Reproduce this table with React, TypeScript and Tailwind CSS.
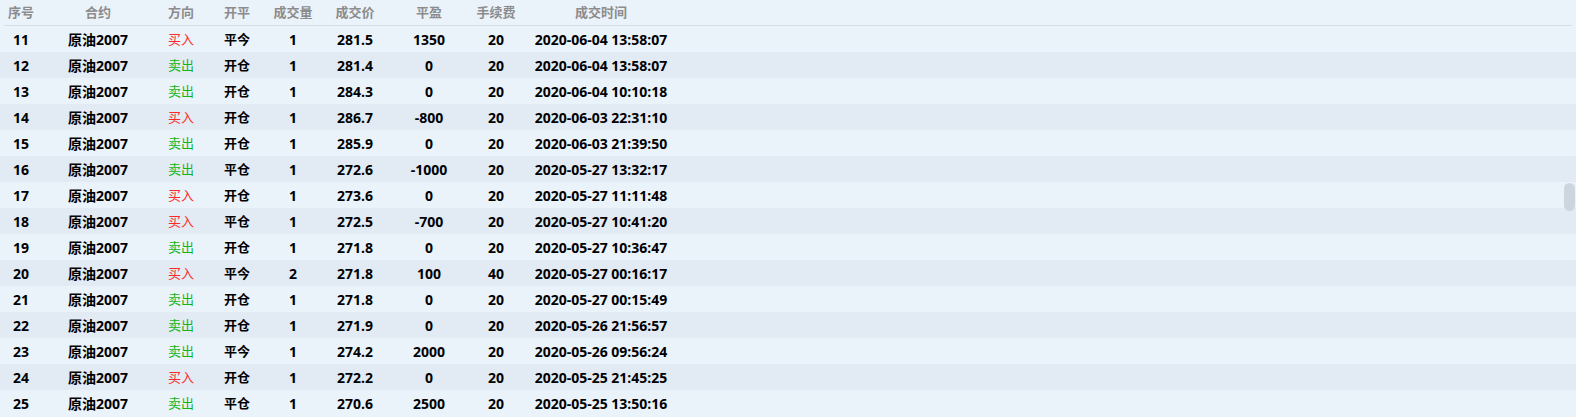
import React from "react";

type Row = [string, string, string, string, string, string, string, string];

const rows: Row[] = [
  ["11", "买入", "平今", "1", "281.5", "1350", "20", "2020-06-04 13:58:07"],
  ["12", "卖出", "开仓", "1", "281.4", "0", "20", "2020-06-04 13:58:07"],
  ["13", "卖出", "开仓", "1", "284.3", "0", "20", "2020-06-04 10:10:18"],
  ["14", "买入", "开仓", "1", "286.7", "-800", "20", "2020-06-03 22:31:10"],
  ["15", "卖出", "开仓", "1", "285.9", "0", "20", "2020-06-03 21:39:50"],
  ["16", "卖出", "平仓", "1", "272.6", "-1000", "20", "2020-05-27 13:32:17"],
  ["17", "买入", "开仓", "1", "273.6", "0", "20", "2020-05-27 11:11:48"],
  ["18", "买入", "平仓", "1", "272.5", "-700", "20", "2020-05-27 10:41:20"],
  ["19", "卖出", "开仓", "1", "271.8", "0", "20", "2020-05-27 10:36:47"],
  ["20", "买入", "平今", "2", "271.8", "100", "40", "2020-05-27 00:16:17"],
  ["21", "卖出", "开仓", "1", "271.8", "0", "20", "2020-05-27 00:15:49"],
  ["22", "卖出", "开仓", "1", "271.9", "0", "20", "2020-05-26 21:56:57"],
  ["23", "卖出", "平今", "1", "274.2", "2000", "20", "2020-05-26 09:56:24"],
  ["24", "买入", "开仓", "1", "272.2", "0", "20", "2020-05-25 21:45:25"],
  ["25", "卖出", "平仓", "1", "270.6", "2500", "20", "2020-05-25 13:50:16"],
];

const font = { fontFamily: '"Open Sans", "Noto Sans CJK SC", sans-serif' };

export default function App() {
  return (
    <div
      className="relative w-[1576px] h-[417px] overflow-hidden bg-[#eaf2fa]"
      style={font}
    >
      <div className="h-[25px] flex items-center text-[13px] font-semibold text-[#8c8c8c]">
        <div className="w-[42px] text-center">序号</div>
        <div className="w-[112px] text-center">合约</div>
        <div className="w-[54px] text-center">方向</div>
        <div className="w-[58px] text-center">开平</div>
        <div className="w-[54px] text-center">成交量</div>
        <div className="w-[70px] text-center">成交价</div>
        <div className="w-[78px] text-center">平盈</div>
        <div className="w-[56px] text-center">手续费</div>
        <div className="w-[154px] text-center">成交时间</div>
      </div>
      <div className="h-px mx-[4px] bg-[#d6dee7]" />
      <div className="flex flex-col">
        {rows.map((r, i) => (
          <div
            key={r[0]}
            className={`h-[26px] flex items-center text-[14px] font-bold text-black ${
              i % 2 === 0 ? "bg-[#eaf2fa]" : "bg-[#e2eaf4]"
            }`}
          >
            <div className="w-[42px] text-center">{r[0]}</div>
            <div className="w-[112px] text-center">原油2007</div>
            <div
              className={`w-[54px] pt-[2px] text-center text-[13px] font-normal ${
                r[1] === "买入" ? "text-[#ff2a2a]" : "text-[#12b512]"
              }`}
            >
              {r[1]}
            </div>
            <div className="w-[58px] pt-[2px] text-center text-[13px]">{r[2]}</div>
            <div className="w-[54px] text-center">{r[3]}</div>
            <div className="w-[70px] text-center">{r[4]}</div>
            <div className="w-[78px] text-center">{r[5]}</div>
            <div className="w-[56px] text-center">{r[6]}</div>
            <div className="w-[154px] text-center">{r[7]}</div>
          </div>
        ))}
      </div>
      <div className="absolute left-[1564px] top-[183px] w-[11px] h-[28px] rounded-full bg-[#cdd6df]" />
    </div>
  );
}
